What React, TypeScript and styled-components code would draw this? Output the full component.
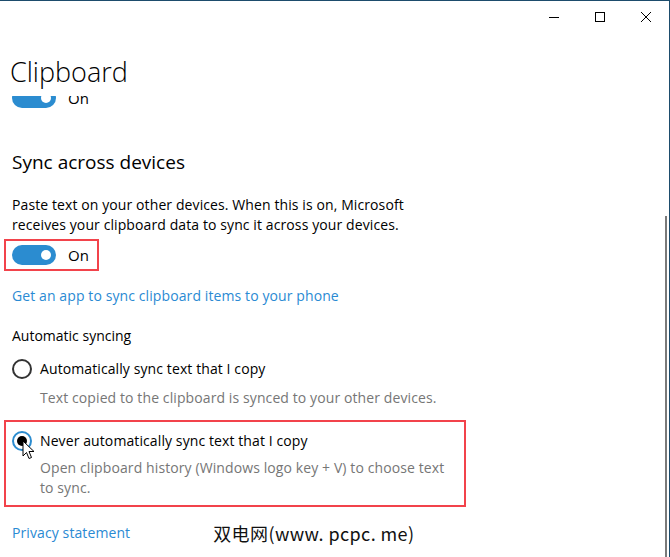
import React from 'react';
import styled, { createGlobalStyle } from 'styled-components';

const GlobalStyle = createGlobalStyle`
  html, body {
    margin: 0;
    padding: 0;
    background: #ffffff;
  }
  body {
    font-family: "Open Sans", "Noto Sans", sans-serif;
    color: #000000;
  }
`;

const Window = styled.div`
  width: 670px;
  height: 557px;
  box-sizing: border-box;
  border-top: 1px solid #1d4c6c;
  border-right: 1px solid #1d4c6c;
  background: #ffffff;
  position: relative;
  overflow: hidden;
  display: flex;
  flex-direction: column;
`;

const TitleBar = styled.div`
  display: flex;
  justify-content: flex-end;
  height: 32px;
  flex-shrink: 0;
`;

const CaptionButton = styled.div`
  width: 46px;
  height: 32px;
  display: flex;
  align-items: center;
  justify-content: center;
`;

const PageTitle = styled.h1`
  margin: 0;
  height: 63px;
  padding: 22px 0 0 10px;
  box-sizing: border-box;
  font-size: 27px;
  line-height: 34px;
  font-weight: 300;
  color: #000;
  flex-shrink: 0;
`;

const Scroller = styled.div`
  flex: 1;
  overflow: hidden;
  padding: 0 12px;
  position: relative;
`;

const ScrollThumb = styled.div`
  position: absolute;
  right: 2px;
  top: 120px;
  bottom: 0;
  width: 2px;
  background: #7a7a7a;
`;

const ToggleRow = styled.div<{ offset?: number }>`
  display: flex;
  align-items: center;
  gap: 12px;
  height: 20px;
  margin-top: ${p => p.offset ?? 0}px;
  font-size: 15px;
`;

const Track = styled.div`
  width: 44px;
  height: 20px;
  border-radius: 10px;
  background: #2b8cd0;
  position: relative;
  flex-shrink: 0;
`;

const Knob = styled.div`
  position: absolute;
  right: 5px;
  top: 5px;
  width: 10px;
  height: 10px;
  border-radius: 50%;
  background: #fff;
`;

const Highlight = styled.div<{ w: number; pad: string; top: number }>`
  width: ${p => p.w}px;
  box-sizing: border-box;
  border: 2px solid #f2434b;
  padding: ${p => p.pad};
  margin: ${p => p.top}px 0 0 -8px;
`;

const SectionTitle = styled.h2`
  margin: 40px 0 0;
  font-size: 19px;
  line-height: 28px;
  font-weight: 400;
`;

const Paragraph = styled.p`
  margin: 19px 0 0;
  font-size: 14px;
  line-height: 20px;
  letter-spacing: 0.1px;
  width: 420px;
`;

const Link = styled.a<{ top: number }>`
  display: block;
  margin-top: ${p => p.top}px;
  font-size: 14px;
  line-height: 20px;
  letter-spacing: 0.1px;
  color: #2a8ad3;
  text-decoration: none;
`;

const Label = styled.div`
  margin-top: 20px;
  font-size: 14px;
  line-height: 20px;
`;

const RadioRow = styled.div<{ top: number }>`
  display: flex;
  align-items: center;
  gap: 8px;
  margin-top: ${p => p.top}px;
  font-size: 14px;
  line-height: 20px;
  letter-spacing: 0.1px;
  position: relative;
`;

const RadioCircle = styled.div<{ checked?: boolean }>`
  width: 20px;
  height: 20px;
  box-sizing: border-box;
  border-radius: 50%;
  border: 2px solid ${p => (p.checked ? '#2b8cd0' : '#333333')};
  display: flex;
  align-items: center;
  justify-content: center;
  flex-shrink: 0;

  &::after {
    content: '';
    display: ${p => (p.checked ? 'block' : 'none')};
    width: 10px;
    height: 10px;
    border-radius: 50%;
    background: #000;
  }
`;

const Description = styled.div<{ top: number }>`
  margin-top: ${p => p.top}px;
  padding-left: 28px;
  font-size: 14px;
  line-height: 20px;
  letter-spacing: 0.1px;
  color: #767676;
  width: 410px;
`;

const Cursor = styled.svg`
  position: absolute;
  left: 10px;
  top: 9px;
`;

const FooterRow = styled.div`
  display: flex;
  align-items: center;
  margin-top: 16px;
  height: 20px;
`;

const Watermark = styled.span`
  margin-left: 83px;
  font-family: "Noto Sans CJK SC", sans-serif;
  font-size: 18px;
  letter-spacing: 0.4px;
  color: #111;
`;

export default function App() {
  return (
    <>
      <GlobalStyle />
      <Window>
        <TitleBar>
          <CaptionButton>
            <svg width="10" height="10" viewBox="0 0 10 10">
              <path d="M0 5.5H10" stroke="#000" strokeWidth="1" />
            </svg>
          </CaptionButton>
          <CaptionButton>
            <svg width="10" height="10" viewBox="0 0 10 10">
              <rect x="0.5" y="0.5" width="9" height="9" fill="none" stroke="#000" strokeWidth="1" />
            </svg>
          </CaptionButton>
          <CaptionButton>
            <svg width="10" height="10" viewBox="0 0 10 10">
              <path d="M0 0L10 10M10 0L0 10" stroke="#000" strokeWidth="1" />
            </svg>
          </CaptionButton>
        </TitleBar>
        <PageTitle>Clipboard</PageTitle>
        <Scroller>
          <ScrollThumb />
          <ToggleRow offset={-8}>
            <Track><Knob /></Track>
            <span>On</span>
          </ToggleRow>

          <SectionTitle>Sync across devices</SectionTitle>
          <Paragraph>
            Paste text on your other devices. When this is on, Microsoft receives your clipboard data to sync it across your devices.
          </Paragraph>

          <Highlight w={95} pad="4px 6px" top={4}>
            <ToggleRow>
              <Track><Knob /></Track>
              <span>On</span>
            </ToggleRow>
          </Highlight>

          <Link top={15}>Get an app to sync clipboard items to your phone</Link>

          <Label>Automatic syncing</Label>

          <RadioRow top={13}>
            <RadioCircle />
            <span>Automatically sync text that I copy</span>
          </RadioRow>
          <Description top={9}>Text copied to the clipboard is synced to your other devices.</Description>

          <Highlight w={462} pad="9px 6px 7px" top={12}>
            <RadioRow top={0}>
              <RadioCircle checked />
              <span>Never automatically sync text that I copy</span>
              <Cursor width="13" height="20" viewBox="0 0 13 20">
                <path d="M1 1V16L4.5 12.5L7 18.5L9.5 17.5L7 11.5H12Z" fill="#fff" stroke="#000" strokeWidth="1" strokeLinejoin="round" />
              </Cursor>
            </RadioRow>
            <Description top={7}>
              Open clipboard history (Windows logo key + V) to choose text to sync.
            </Description>
          </Highlight>

          <FooterRow>
            <Link top={0}>Privacy statement</Link>
            <Watermark>双电网(www. pcpc. me)</Watermark>
          </FooterRow>
        </Scroller>
      </Window>
    </>
  );
}
